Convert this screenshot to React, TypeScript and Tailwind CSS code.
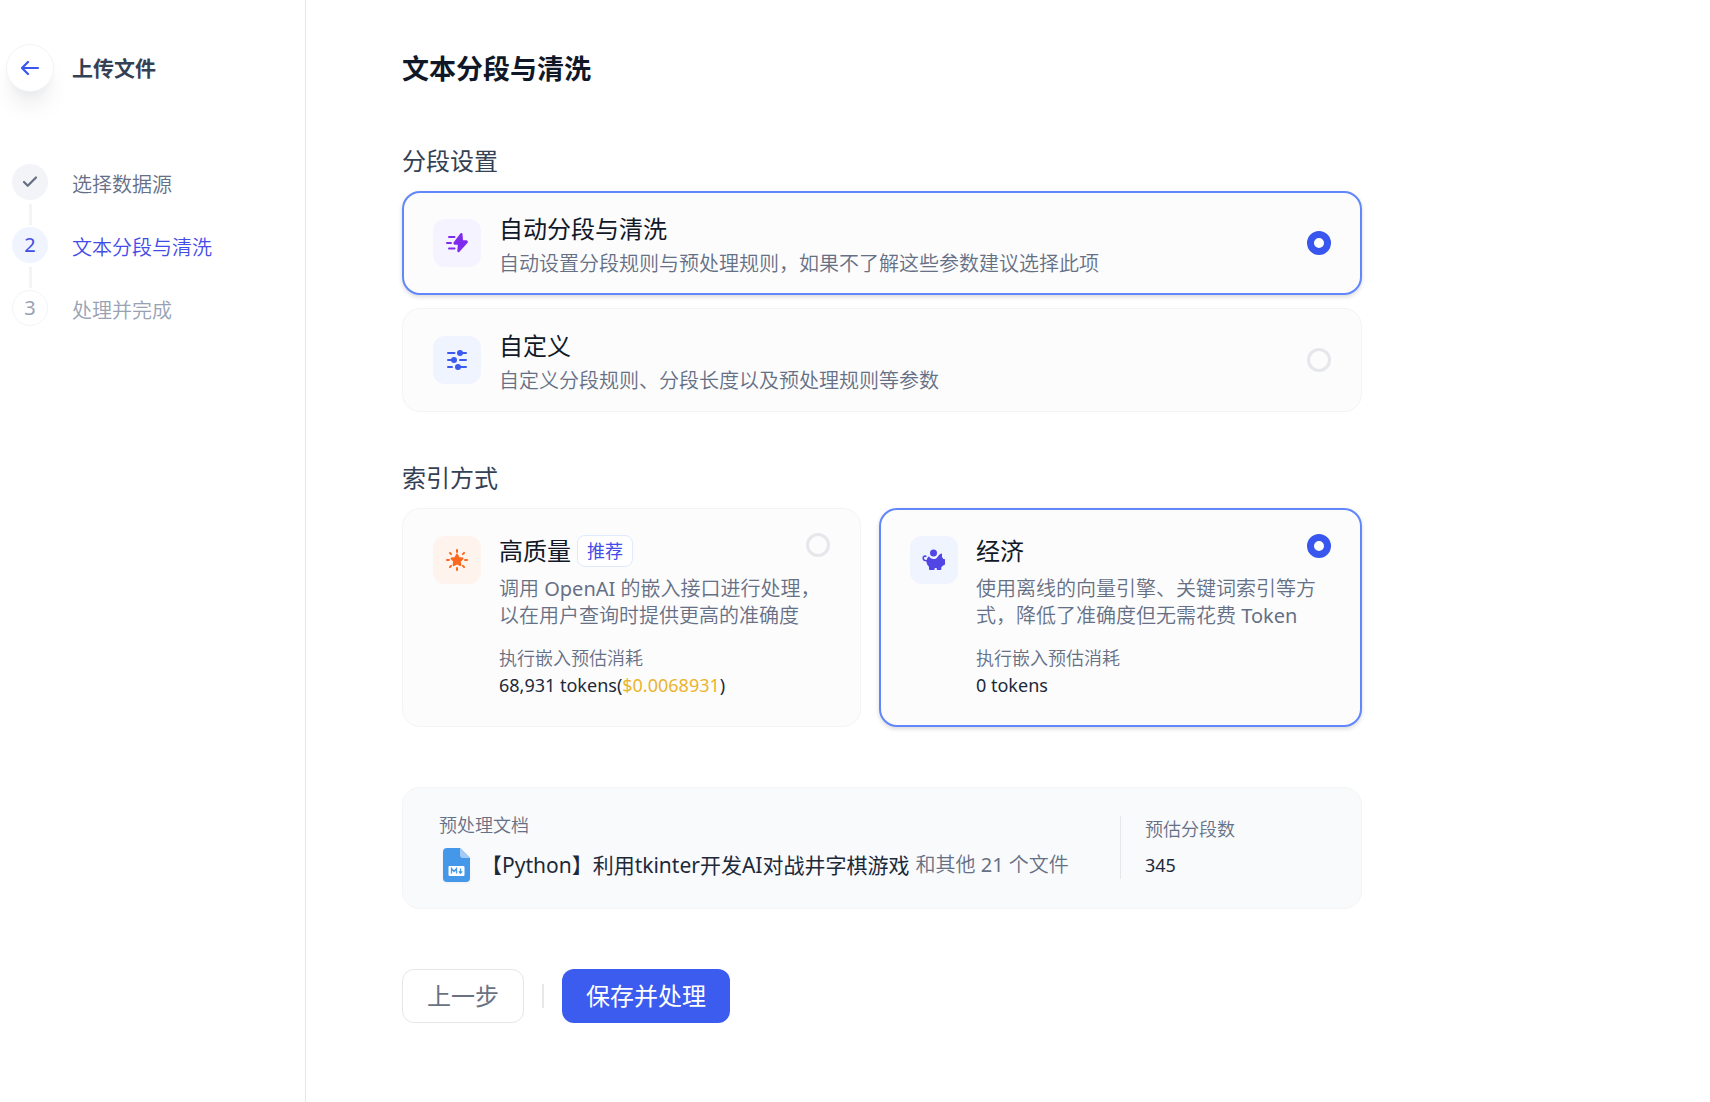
import { Check } from "lucide-react";
import { clsx } from "clsx";

const steps = [
  { label: "选择数据源", state: "done" },
  { label: "文本分段与清洗", state: "current" },
  { label: "处理并完成", state: "todo" },
];

function BackIcon() {
  return (
    <svg width="24" height="24" viewBox="0 0 24 24" fill="none">
      <path d="M20 12H4M10 6l-6 6 6 6" stroke="#3956EE" strokeWidth="2.200" strokeLinecap="round" strokeLinejoin="round" />
    </svg>
  );
}

function LightningIcon() {
  return (
    <svg width="24" height="24" viewBox="0 0 24 24" fill="none">
      <path
        d="M16.400 3 9.600 11.800c-.3.400-.1.900.4.900h4l-.6 7.500 8.200-8.900c.4-.4.1-1-.4-1h-4.200Z"
        fill="#7F2BED"
        stroke="#7F2BED"
        strokeWidth="2.200"
        strokeLinejoin="round"
      />
      <path d="M4 6h5.500M2 12h4M4 17.500h5.500" stroke="#7F2BED" strokeWidth="2" strokeLinecap="round" />
    </svg>
  );
}

function SlidersIcon() {
  return (
    <svg width="24" height="24" viewBox="0 0 24 24" fill="none">
      <path d="M3 5h6.500M15 5h6M3 12h4M15 12h6M3 19h4M13 19h8" stroke="#3B5BEE" strokeWidth="2" strokeLinecap="round" />
      <circle cx="15" cy="5" r="3" fill="#3B5BEE" />
      <circle cx="9" cy="12" r="3" fill="#3B5BEE" />
      <circle cx="13" cy="19" r="3" fill="#3B5BEE" />
    </svg>
  );
}

function StarIcon() {
  return (
    <svg width="24" height="24" viewBox="0 0 24 24" fill="none">
      <path
        d="M12 2v2M12 20v2M2 12h2M20 12h2M4.900 4.900l1.200 1.200M17.900 17.900l1.200 1.200M4.900 19.100l1.200-1.200M17.900 6.100l1.200-1.200"
        stroke="#FA6820"
        strokeWidth="2"
        strokeLinecap="round"
      />
      <path
        d="m12 6.600 1.700 3.400 3.800.600-2.700 2.700.6 3.800-3.400-1.800-3.400 1.800.6-3.800-2.700-2.700 3.800-.600Z"
        fill="#FA6820"
        stroke="#FA6820"
        strokeWidth="2"
        strokeLinejoin="round"
      />
    </svg>
  );
}

function PiggyIcon() {
  return (
    <svg width="24" height="24" viewBox="0 0 24 24" fill="none">
      <circle cx="11.500" cy="5" r="3.500" fill="#5145E5" />
      <path
        d="M7 8.300c1 1.700 2.600 2.700 4.500 2.700 1.900 0 3.500-1 4.400-2.600.9-1.400 2-2.600 3.200-3 .5-.1.900.2.900.7v3l1.400 2H22c.6 0 1 .4 1 1v4c0 .5-.3.900-.8 1-1.300.4-2.200 1.200-2.900 2.200V21c0 .6-.4 1-1 1h-2.600c-.6 0-1-.4-1-1v-1h-2v1c0 .6-.4 1-1 1H8c-.6 0-1-.4-1-1v-2.300c-1.300-1-2.200-2.700-2.500-4.700C4.200 11.800 5.400 9.500 7 8.300Z"
        fill="#5145E5"
      />
      <path d="M3.800 8.300C2.400 7.700 1.200 8.700 1.200 10c0 1.600 1.300 2.800 3.800 2.800" stroke="#5145E5" strokeWidth="1.600" strokeLinecap="round" />
    </svg>
  );
}

function MarkdownIcon() {
  return (
    <svg width="36" height="36" viewBox="0 0 36 36" fill="none" className="drop-shadow-xs">
      <path d="M4 5a4 4 0 0 1 4-4h13l10 10v20a4 4 0 0 1-4 4H8a4 4 0 0 1-4-4Z" fill="#4597EA" />
      <path d="m21 1 10 10h-7a3 3 0 0 1-3-3Z" fill="#A3CBF5" />
      <rect x="9.500" y="19" width="16" height="10" rx="1" fill="#fff" />
      <path d="M12.500 26.500v-5l2.500 3 2.500-3v5M21.500 21.500v4.500M19.800 24.400l1.700 1.800 1.700-1.800" stroke="#4597EA" strokeWidth="1.300" />
    </svg>
  );
}

function Radio({ name, label, checked }: { name: string; label: string; checked?: boolean }) {
  return (
    <input
      type="radio"
      name={name}
      aria-label={label}
      defaultChecked={checked}
      className="size-6 shrink-0 appearance-none rounded-full border-3 border-gray-200 checked:border-7 checked:border-[#3956EE] checked:bg-white"
    />
  );
}

interface OptionProps {
  name: string;
  icon: React.ReactNode;
  iconBg: string;
  title: string;
  checked?: boolean;
  children: React.ReactNode;
}

function SegmentOption({ name, icon, iconBg, title, checked, children }: OptionProps) {
  return (
    <label
      className={clsx(
        "flex h-[104px] items-center rounded-[18px] bg-[#FCFCFD]",
        checked ? "border-2 border-[#6187FB] px-[29px] shadow-[0_2px_4px_rgba(16,24,40,0.16)]" : "border border-gray-100 px-[30px]",
      )}
    >
      <span className={clsx("flex size-12 shrink-0 items-center justify-center rounded-xl", iconBg)}>{icon}</span>
      <span className="ml-[18px] flex-1 pt-[3px]">
        <span className="block text-2xl leading-9 text-[#111827]">{title}</span>
        <span className="mt-[2px] block text-[20px] leading-[30px] font-[350] text-[#667085]">{children}</span>
      </span>
      <Radio name={name} label={title} checked={checked} />
    </label>
  );
}

interface IndexOptionProps extends OptionProps {
  tag?: string;
  cost: React.ReactNode;
}

function IndexOption({ name, icon, iconBg, title, tag, checked, cost, children }: IndexOptionProps) {
  return (
    <label
      className={clsx(
        "relative flex h-[219px] items-start rounded-[18px] bg-[#FCFCFD]",
        checked
          ? "border-2 border-[#6187FB] px-[29px] pt-[26px] shadow-[0_2px_4px_rgba(16,24,40,0.16)]"
          : "border border-gray-100 px-[30px] pt-[27px]",
      )}
    >
      <span className={clsx("flex size-12 shrink-0 items-center justify-center rounded-xl", iconBg)}>{icon}</span>
      <span className="ml-[18px] flex-1 whitespace-nowrap">
        <span className="flex h-[30px] items-center gap-[6px] text-2xl text-[#111827]">
          {title}
          {tag && (
            <span className="flex h-8 items-center rounded-lg border border-[#E0EAFF] bg-white px-[9px] text-lg text-[#444CE7]">{tag}</span>
          )}
        </span>
        <span className="mt-[9px] block text-[20px] leading-[27px] font-[350] text-[#667085]">{children}</span>
        <span className="mt-4 block text-lg leading-[27px] font-[350] text-[#667085]">执行嵌入预估消耗</span>
        <span className="block text-lg leading-[27px] text-[#1D2939]">{cost}</span>
      </span>
      <span className={clsx("absolute top-6 flex", checked ? "right-[29px]" : "right-[30px]")}>
        <Radio name={name} label={title} checked={checked} />
      </span>
    </label>
  );
}

function Sidebar() {
  return (
    <aside className="w-[306px] shrink-0 border-r border-gray-200 pt-11 pl-[6px]">
      <div className="flex items-center gap-[18px]">
        <button
          type="button"
          aria-label="返回"
          className="flex size-12 items-center justify-center rounded-full border border-gray-100 bg-white shadow-[0_18px_24px_-6px_rgba(16,24,40,0.09),0_6px_9px_-3px_rgba(16,24,40,0.04)]"
        >
          <BackIcon />
        </button>
        <h2 className="pt-[2px] text-[21px] font-bold text-[#344054]">上传文件</h2>
      </div>
      <ol className="mt-[72px] pl-[6px]">
        {steps.map((step, index) => (
          <li key={step.label} className="flex gap-6">
            <div className="flex flex-col items-center">
              <span
                className={clsx(
                  "flex size-9 items-center justify-center rounded-full text-[20px]",
                  step.state === "done" && "bg-[#F2F4F7] text-[#667085]",
                  step.state === "current" && "bg-[#EFF4FF] text-[#444CE7]",
                  step.state === "todo" && "border border-[#F2F4F7] text-[#98A2B3]",
                )}
              >
                {step.state === "done" ? <Check className="size-[18px]" strokeWidth={3} /> : index + 1}
              </span>
              {index < steps.length - 1 && <span className="mt-1 mb-[2px] h-[21px] w-[3px] bg-[#F2F4F7]" />}
            </div>
            <span
              className={clsx(
                "pt-[3px] text-[20px] leading-9 font-[350]",
                step.state === "done" && "text-[#667085]",
                step.state === "current" && "text-[#444CE7]",
                step.state === "todo" && "text-[#98A2B3]",
              )}
            >
              {step.label}
            </span>
          </li>
        ))}
      </ol>
    </aside>
  );
}

export default function App() {
  return (
    <div className="flex min-h-screen bg-white font-['Noto_Sans','Noto_Sans_CJK_SC',sans-serif]">
      <Sidebar />
      <main className="flex-1 px-24 pt-12">
        <div className="max-w-[960px]">
          <h1 className="text-[27px] leading-[42px] font-bold text-[#101828]">文本分段与清洗</h1>

          <h2 className="mt-[53px] text-2xl leading-9 text-[#344054]">分段设置</h2>
          <div className="mt-3 flex flex-col gap-[13px]">
            <SegmentOption name="segment" icon={<LightningIcon />} iconBg="bg-[#F5F3FF]" title="自动分段与清洗" checked>
              自动设置分段规则与预处理规则，如果不了解这些参数建议选择此项
            </SegmentOption>
            <SegmentOption name="segment" icon={<SlidersIcon />} iconBg="bg-[#EFF4FF]" title="自定义">
              自定义分段规则、分段长度以及预处理规则等参数
            </SegmentOption>
          </div>

          <h2 className="mt-12 text-2xl leading-9 text-[#344054]">索引方式</h2>
          <div className="mt-3 grid grid-cols-[459fr_483fr] gap-[18px]">
            <IndexOption
              name="index"
              icon={<StarIcon />}
              iconBg="bg-[#FFF4ED]"
              title="高质量"
              tag="推荐"
              cost={
                <>
                  68,931 tokens(<span className="text-[#EAB52D]">$0.0068931</span>)
                </>
              }
            >
              调用 <span className="font-normal">OpenAI</span> 的嵌入接口进行处理，
              <br />
              以在用户查询时提供更高的准确度
            </IndexOption>
            <IndexOption name="index" icon={<PiggyIcon />} iconBg="bg-[#EFF4FF]" title="经济" cost="0 tokens" checked>
              使用离线的向量引擎、关键词索引等方
              <br />
              式，降低了准确度但无需花费 <span className="font-normal">Token</span>
            </IndexOption>
          </div>

          <section className="mt-[60px] flex h-[122px] items-center rounded-[18px] border border-gray-100 bg-[#F9FAFC] pb-[2px] pl-9">
            <div className="flex-1">
              <div className="text-lg leading-[27px] font-[350] text-[#667085]">预处理文档</div>
              <div className="mt-2 flex items-center text-[21px] leading-9 text-[#1D2939]">
                <MarkdownIcon />
                <span className="ml-[6px]">【Python】利用tkinter开发AI对战井字棋游戏</span>
                <span className="ml-[6px] text-[20px] font-[350] text-[#667085]">
                  和其他 <span className="font-normal">21</span> 个文件
                </span>
              </div>
            </div>
            <div className="flex h-[63px] w-[241px] flex-col justify-between border-l border-gray-200 pl-6">
              <div className="text-lg leading-[27px] font-[350] text-[#667085]">预估分段数</div>
              <div className="text-lg leading-[27px] text-[#1D2939]">345</div>
            </div>
          </section>

          <div className="mt-[60px] flex items-center text-2xl">
            <button type="button" className="h-[54px] rounded-xl border border-gray-200 px-6 text-gray-500">
              上一步
            </button>
            <span className="mx-[18px] h-6 w-[2px] bg-gray-200" />
            <button type="button" className="h-[54px] rounded-xl bg-[#3C5CEF] px-6 text-white">
              保存并处理
            </button>
          </div>
        </div>
      </main>
    </div>
  );
}
